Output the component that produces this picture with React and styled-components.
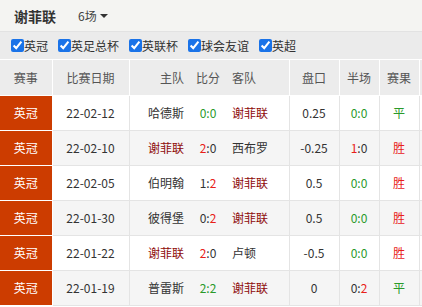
import React from 'react';
import styled, { createGlobalStyle } from 'styled-components';

const GlobalStyle = createGlobalStyle`
  html, body {
    margin: 0;
    padding: 0;
    background: #fff;
    overflow: hidden;
  }
  body {
    font-family: "Noto Sans CJK SC", "Noto Sans", sans-serif;
    color: #333;
  }
`;

const Page = styled.div`
  width: 422px;
  height: 307px;
  overflow: hidden;
`;

const TopBar = styled.div`
  display: flex;
  align-items: center;
  height: 32px;
  padding-left: 14px;
  background: #f4f4f2;
  border-bottom: 1px solid #e2e2e2;
  box-sizing: border-box;
`;

const Title = styled.div`
  font-size: 14px;
  font-weight: 700;
  color: #333;
`;

const Count = styled.div`
  display: flex;
  align-items: center;
  margin-left: 22px;
  font-size: 12px;
  color: #444;

  &::after {
    content: '';
    margin-left: 3px;
    border-left: 4px solid transparent;
    border-right: 4px solid transparent;
    border-top: 4px solid #333;
  }
`;

const FilterBar = styled.div`
  display: flex;
  align-items: center;
  gap: 10px;
  height: 28px;
  padding-left: 11px;
  background: #ebebeb;
  border-bottom: 1px solid #fff;
  box-sizing: border-box;
`;

const Option = styled.label`
  display: flex;
  align-items: center;
  font-size: 12px;
  color: #333;

  input {
    width: 13px;
    height: 13px;
    margin: 0;
    accent-color: #1a73e8;
  }
`;

const Table = styled.table`
  border-collapse: collapse;
  table-layout: fixed;
  width: 480px;
  font-size: 12px;
`;

const Th = styled.th`
  height: 35px;
  padding: 0 ${(p) => p.$pad || 0}px;
  font-weight: 400;
  color: #555;
  background: #ececec;
  text-align: ${(p) => p.$align || 'center'};
  border-right: ${(p) => (p.$line ? '1px solid #fff' : 'none')};
  border-bottom: 1px solid #fff;
  box-sizing: border-box;
`;

const Row = styled.tr`
  background: ${(p) => (p.$alt ? '#f5f5f5' : '#fff')};
`;

const Td = styled.td`
  height: 34px;
  padding: 0 ${(p) => p.$pad || 0}px;
  text-align: ${(p) => p.$align || 'center'};
  color: ${(p) => p.$color || '#333'};
  border-right: ${(p) => (p.$line ? '1px solid #e4e4e4' : 'none')};
  border-bottom: 1px solid #e4e4e4;
  white-space: nowrap;
`;

const League = styled(Td)`
  background: #cc3c00;
  color: #fff;
  border-right: 1px solid #fff;
  border-bottom: 1px solid #fff;
`;

const Goal = styled.span`
  color: ${(p) => p.$color};
`;

const ME = '谢菲联';
const GREEN = '#2a9a2a';
const RED = '#e8201a';
const TEAM_RED = '#8e0a0a';

const matches = [
  { date: '22-02-12', home: '哈德斯', away: ME, score: [0, 0], line: '0.25', half: [0, 0], result: '平' },
  { date: '22-02-10', home: ME, away: '西布罗', score: [2, 0], line: '-0.25', half: [1, 0], result: '胜' },
  { date: '22-02-05', home: '伯明翰', away: ME, score: [1, 2], line: '0.5', half: [0, 0], result: '胜' },
  { date: '22-01-30', home: '彼得堡', away: ME, score: [0, 2], line: '0.5', half: [0, 0], result: '胜' },
  { date: '22-01-22', home: ME, away: '卢顿', score: [2, 0], line: '-0.5', half: [0, 0], result: '胜' },
  { date: '22-01-19', home: '普雷斯', away: ME, score: [2, 2], line: '0', half: [0, 2], result: '平' },
];

const Score = ({ value, homeIsMe }) => {
  const [h, a] = value;
  if (h === a) {
    return <Goal $color={GREEN}>{h}:{a}</Goal>;
  }
  const mine = homeIsMe ? h : a;
  const other = homeIsMe ? a : h;
  const myColor = mine > other ? RED : '#333';
  return (
    <>
      <Goal $color={homeIsMe ? myColor : '#333'}>{h}</Goal>
      <Goal $color="#333">:</Goal>
      <Goal $color={homeIsMe ? '#333' : myColor}>{a}</Goal>
    </>
  );
};

const filters = ['英冠', '英足总杯', '英联杯', '球会友谊', '英超'];

const App = () => (
  <Page>
    <GlobalStyle />
    <TopBar>
      <Title>谢菲联</Title>
      <Count>6场</Count>
    </TopBar>
    <FilterBar>
      {filters.map((f) => (
        <Option key={f}>
          <input type="checkbox" defaultChecked />
          {f}
        </Option>
      ))}
    </FilterBar>
    <Table>
      <colgroup>
        <col style={{ width: 52 }} />
        <col style={{ width: 77 }} />
        <col style={{ width: 63 }} />
        <col style={{ width: 32 }} />
        <col style={{ width: 65 }} />
        <col style={{ width: 50 }} />
        <col style={{ width: 40 }} />
        <col style={{ width: 40 }} />
        <col style={{ width: 61 }} />
      </colgroup>
      <thead>
        <tr>
          <Th $line>赛事</Th>
          <Th $line>比赛日期</Th>
          <Th $align="right" $pad={8}>主队</Th>
          <Th>比分</Th>
          <Th $align="left" $pad={8} $line>客队</Th>
          <Th $line>盘口</Th>
          <Th $line>半场</Th>
          <Th $line>赛果</Th>
          <Th />
        </tr>
      </thead>
      <tbody>
        {matches.map((m, i) => {
          const homeIsMe = m.home === ME;
          return (
            <Row key={m.date} $alt={i % 2 === 1}>
              <League>英冠</League>
              <Td $line>{m.date}</Td>
              <Td $align="right" $pad={8} $color={homeIsMe ? TEAM_RED : '#333'}>{m.home}</Td>
              <Td><Score value={m.score} homeIsMe={homeIsMe} /></Td>
              <Td $align="left" $pad={8} $line $color={homeIsMe ? '#333' : TEAM_RED}>{m.away}</Td>
              <Td $line>{m.line}</Td>
              <Td $line><Score value={m.half} homeIsMe={homeIsMe} /></Td>
              <Td $line $color={m.result === '胜' ? RED : GREEN}>{m.result}</Td>
              <Td />
            </Row>
          );
        })}
      </tbody>
    </Table>
  </Page>
);

export default App;
